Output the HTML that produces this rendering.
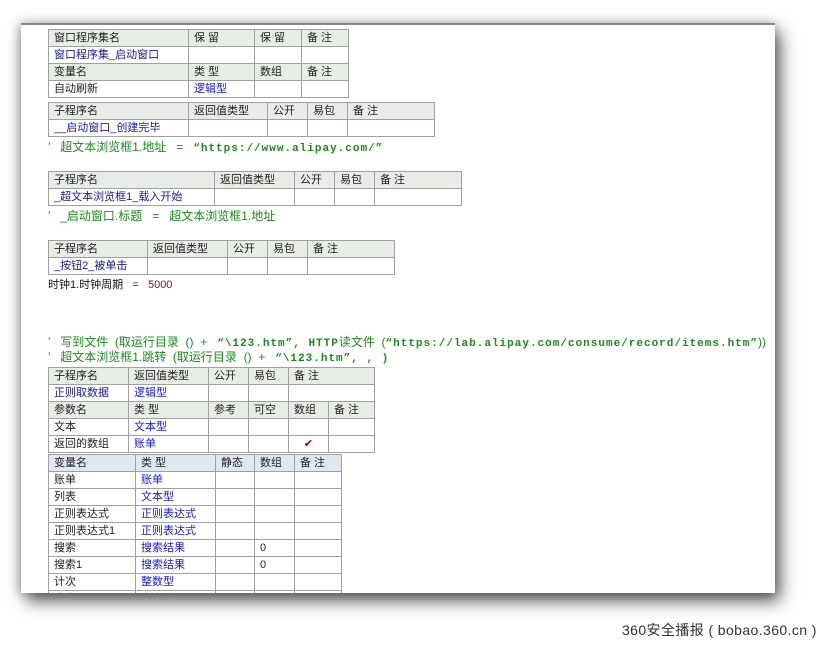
<!DOCTYPE html>
<html><head><meta charset="utf-8"><style>
body{margin:0;width:830px;height:647px;background:#fff;position:relative;overflow:hidden;font-family:"Liberation Sans","Noto Sans CJK SC",sans-serif;}
#panel{position:absolute;left:21px;top:23px;width:754px;height:568px;background:#fff;border-top:2px solid #888;box-shadow:5px 8px 16px rgba(0,0,0,0.65),-2px 0 10px rgba(0,0,0,0.25);overflow:hidden}
table{position:absolute;border-collapse:collapse;table-layout:fixed;font-size:11px;font-family:"Liberation Sans","WenQuanYi Zen Hei",sans-serif}
td{border:1px solid #a0a0a0;height:16px;padding:0 0 0 5px;white-space:nowrap;overflow:hidden;color:#222;line-height:15px}
tr.h td{background:#e8ece6}
tr.b td{background:#dfe7f0}
.bl{color:#1a1a9a}.lk{color:#1818e0}
.c{position:absolute;font-size:12px;color:#1c8a1c;white-space:nowrap;font-family:"Liberation Sans","WenQuanYi Zen Hei",sans-serif}
.m{font-family:"Liberation Mono",monospace;font-weight:bold;font-size:11px;letter-spacing:1px}
#foot{position:absolute;left:622px;top:620px;font-size:14px;letter-spacing:0.4px;color:#333;font-family:"Liberation Sans","Noto Sans CJK SC",sans-serif}
</style></head><body>
<div id="panel">
<table style="left:27px;top:4px;width:300px"><colgroup><col style="width:140px"><col style="width:66px"><col style="width:47px"><col style="width:47px"></colgroup>
<tr class="h"><td>窗口程序集名</td><td>保 留</td><td>保 留</td><td>备 注</td></tr>
<tr><td class="bl">窗口程序集_启动窗口</td><td></td><td></td><td></td></tr>
<tr class="h"><td>变量名</td><td>类 型</td><td>数组</td><td>备 注</td></tr>
<tr><td>自动刷新</td><td class="lk">逻辑型</td><td></td><td></td></tr></table>

<table style="left:27px;top:77px;width:386px"><colgroup><col style="width:140px"><col style="width:79px"><col style="width:40px"><col style="width:40px"><col style="width:87px"></colgroup>
<tr class="h"><td>子程序名</td><td>返回值类型</td><td>公开</td><td>易包</td><td>备 注</td></tr>
<tr><td class="bl">__启动窗口_创建完毕</td><td></td><td></td><td></td><td></td></tr></table>
<div class="c" style="left:27px;top:113px">’ &nbsp;&nbsp;超文本浏览框1.地址 &nbsp;&nbsp;= &nbsp;&nbsp;<span class="m">“https://www.alipay.com/”</span></div>

<table style="left:27px;top:146px;width:413px"><colgroup><col style="width:166px"><col style="width:80px"><col style="width:40px"><col style="width:40px"><col style="width:87px"></colgroup>
<tr class="h"><td>子程序名</td><td>返回值类型</td><td>公开</td><td>易包</td><td>备 注</td></tr>
<tr><td class="bl">_超文本浏览框1_载入开始</td><td></td><td></td><td></td><td></td></tr></table>
<div class="c" style="left:27px;top:182px">’ &nbsp;&nbsp;_启动窗口.标题 &nbsp;&nbsp;= &nbsp;&nbsp;超文本浏览框1.地址</div>

<table style="left:27px;top:215px;width:346px"><colgroup><col style="width:99px"><col style="width:80px"><col style="width:40px"><col style="width:40px"><col style="width:87px"></colgroup>
<tr class="h"><td>子程序名</td><td>返回值类型</td><td>公开</td><td>易包</td><td>备 注</td></tr>
<tr><td class="bl">_按钮2_被单击</td><td></td><td></td><td></td><td></td></tr></table>
<div class="c" style="left:27px;top:251px;color:#111;font-size:11px">时钟1.时钟周期 &nbsp;&nbsp;<span style="color:#1818e0">=</span> &nbsp;&nbsp;<span style="color:#8a1010">5000</span></div>

<div class="c" style="left:27px;top:308px">’ &nbsp;&nbsp;写到文件 &nbsp;(取运行目录 &nbsp;() &nbsp;+ &nbsp;&nbsp;<span class="m">“\123.htm”, HTTP</span>读文件 &nbsp;(<span class="m">“https://lab.alipay.com/consume/record/items.htm”</span>))</div>
<div class="c" style="left:27px;top:323px">’ &nbsp;&nbsp;超文本浏览框1.跳转 &nbsp;(取运行目录 &nbsp;() &nbsp;+ &nbsp;&nbsp;<span class="m">“\123.htm”, , )</span></div>

<table style="left:27px;top:342px;width:326px"><colgroup><col style="width:80px"><col style="width:80px"><col style="width:40px"><col style="width:40px"><col style="width:40px"><col style="width:46px"></colgroup>
<tr class="h"><td>子程序名</td><td>返回值类型</td><td>公开</td><td>易包</td><td colspan="2">备 注</td></tr>
<tr><td class="bl">正则取数据</td><td class="lk">逻辑型</td><td></td><td></td><td colspan="2"></td></tr>
<tr class="h"><td>参数名</td><td>类 型</td><td>参考</td><td>可空</td><td>数组</td><td>备 注</td></tr>
<tr><td>文本</td><td class="lk">文本型</td><td></td><td></td><td></td><td></td></tr>
<tr><td>返回的数组</td><td class="lk">账单</td><td></td><td></td><td style="color:#900;text-align:center;padding:0">✔</td><td></td></tr></table>

<table style="left:27px;top:429px;width:293px"><colgroup><col style="width:87px"><col style="width:80px"><col style="width:39px"><col style="width:40px"><col style="width:47px"></colgroup>
<tr class="b"><td>变量名</td><td>类 型</td><td>静态</td><td>数组</td><td>备 注</td></tr>
<tr><td>账单</td><td class="lk">账单</td><td></td><td></td><td></td></tr>
<tr><td>列表</td><td class="lk">文本型</td><td></td><td></td><td></td></tr>
<tr><td>正则表达式</td><td class="lk">正则表达式</td><td></td><td></td><td></td></tr>
<tr><td>正则表达式1</td><td class="lk">正则表达式</td><td></td><td></td><td></td></tr>
<tr><td>搜索</td><td class="lk">搜索结果</td><td></td><td>0</td><td></td></tr>
<tr><td>搜索1</td><td class="lk">搜索结果</td><td></td><td>0</td><td></td></tr>
<tr><td>计次</td><td class="lk">整数型</td><td></td><td></td><td></td></tr>
<tr><td>文本</td><td class="lk">文本型</td><td></td><td></td><td></td></tr></table>
</div>
<div id="foot">360安全播报 ( bobao.360.cn )</div>
</body></html>
